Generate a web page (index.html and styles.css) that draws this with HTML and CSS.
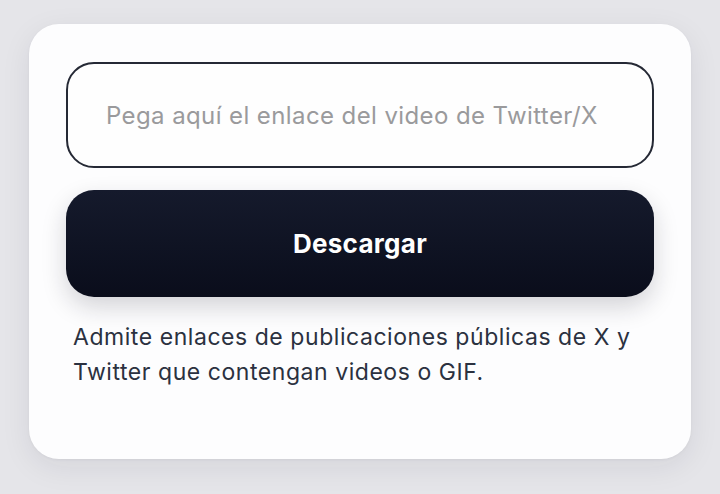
FILE: index.html
```html
<!DOCTYPE html>
<html lang="es">
<head>
<meta charset="utf-8">
<link rel="stylesheet" href="styles.css">
</head>
<body>
<main class="card">
  <input class="url-input" type="text" placeholder="Pega aquí el enlace del video de Twitter/X">
  <button class="download-btn" type="button">Descargar</button>
  <p class="hint">Admite enlaces de publicaciones públicas de X y Twitter que contengan videos o GIF.</p>
</main>
</body>
</html>
```
FILE: styles.css
```css
html, body {
  margin: 0;
  padding: 0;
}
body {
  width: 720px;
  height: 494px;
  background: #e5e5e9;
  font-family: Inter, "Noto Sans", sans-serif;
  padding: 24px 0 0 29px;
  box-sizing: border-box;
  overflow: hidden;
}
.card {
  width: 662px;
  height: 435px;
  box-sizing: border-box;
  background: #fdfdfe;
  border-radius: 30px;
  padding: 38px 37px 0 37px;
  display: flex;
  flex-direction: column;
  box-shadow: 0 8px 30px rgba(30, 30, 50, 0.08), 0 1px 3px rgba(30, 30, 50, 0.05);
}
.url-input {
  height: 106px;
  box-sizing: border-box;
  width: 100%;
  border: 2px solid #252935;
  border-radius: 28px;
  background: #fefefe;
  padding: 0 38px;
  font-family: inherit;
  font-size: 24px;
  letter-spacing: 0.4px;
  color: #222;
  outline: none;
}
.url-input::placeholder {
  color: #9a9a9c;
}
.download-btn {
  margin-top: 22px;
  height: 107px;
  width: 100%;
  border: none;
  border-radius: 28px;
  background: linear-gradient(180deg, #151a2c 0%, #0a0d1b 100%);
  color: #ffffff;
  font-family: inherit;
  font-size: 26px;
  font-weight: 700;
  letter-spacing: 0.3px;
  box-shadow: 0 10px 24px rgba(20, 24, 40, 0.18);
  cursor: pointer;
}
.hint {
  margin: 23px 0 0 0;
  padding-left: 7px;
  font-size: 23px;
  letter-spacing: 0.55px;
  line-height: 34.5px;
  color: #2b3140;
}
```
